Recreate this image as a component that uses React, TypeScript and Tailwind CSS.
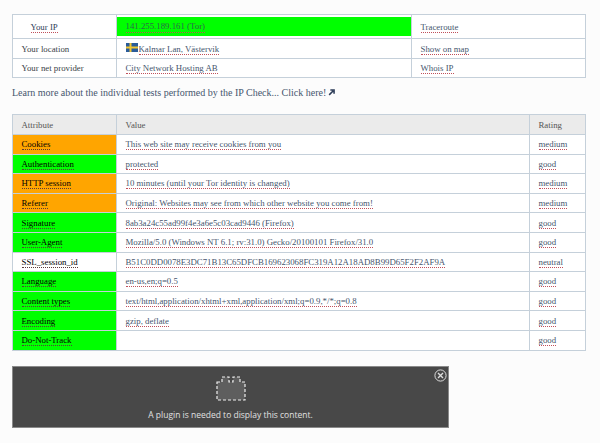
const serif = "font-['Liberation_Serif',serif]"

const Dotted = ({ children, dark }: { children: React.ReactNode; dark?: boolean }) => (
  <span className={`border-b border-dotted ${dark ? "border-[#5a3b3b]" : "border-[#c0505a]"}`}>{children}</span>
)

const rows: [string, string, string, string][] = [
  ["Cookies", "bg-[#ffa500]", "This web site may receive cookies from you", "medium"],
  ["Authentication", "bg-[#00ff00]", "protected", "good"],
  ["HTTP session", "bg-[#ffa500]", "10 minutes (until your Tor identity is changed)", "medium"],
  ["Referer", "bg-[#ffa500]", "Original: Websites may see from which other website you come from!", "medium"],
  ["Signature", "bg-[#00ff00]", "8ab3a24c55ad99f4e3a6e5c03cad9446 (Firefox)", "good"],
  ["User-Agent", "bg-[#00ff00]", "Mozilla/5.0 (Windows NT 6.1; rv:31.0) Gecko/20100101 Firefox/31.0", "good"],
  ["SSL_session_id", "bg-white", "B51C0DD0078E3DC71B13C65DFCB169623068FC319A12A18AD8B99D65F2F2AF9A", "neutral"],
  ["Language", "bg-[#00ff00]", "en-us,en;q=0.5", "good"],
  ["Content types", "bg-[#00ff00]", "text/html,application/xhtml+xml,application/xml;q=0.9,*/*;q=0.8", "good"],
  ["Encoding", "bg-[#00ff00]", "gzip, deflate", "good"],
  ["Do-Not-Track", "bg-[#00ff00]", "", "good"],
]

const Flag = () => (
  <svg width="12" height="9" viewBox="0 0 12 9" className="mr-[1px] inline-block align-[0px]">
    <rect width="12" height="9" fill="#2a5c9a" />
    <rect x="3.5" width="2" height="9" fill="#f2c530" />
    <rect y="3.5" width="12" height="2" fill="#f2c530" />
  </svg>
)

const cell = "border border-[#c5d0da] px-[8.5px] py-0 text-left font-normal"

export default function App() {
  return (
    <div className={`min-h-[443px] w-[600px] bg-[#fcfcfc] pt-[14px] pl-[12px] text-[8.8px] leading-[12px] text-[#46566e] ${serif}`}>
      <table className="w-[574px] table-fixed border-collapse bg-white">
        <colgroup>
          <col className="w-[104px]" />
          <col className="w-[295px]" />
          <col />
        </colgroup>
        <tbody>
          <tr className="h-[24px]">
            <td className={`${cell} pl-[17.5px] font-bold text-[#2d3d58]`}><Dotted>Your IP</Dotted></td>
            <td className="border border-[#c5d0da] py-[2px] pl-0 pr-0">
              <div className="flex h-[19px] items-center bg-[#00ff00] pl-[8.5px] text-[#2f6a4a]"><Dotted>141.255.189.161 (Tor)</Dotted></div>
            </td>
            <td className={cell}><Dotted>Traceroute</Dotted></td>
          </tr>
          <tr className="h-[20px]">
            <td className={`${cell} text-[#3a3f48]`}>Your location</td>
            <td className={cell}><Flag /><Dotted>Kalmar Lan, Västervik</Dotted></td>
            <td className={cell}><Dotted>Show on map</Dotted></td>
          </tr>
          <tr className="h-[19px]">
            <td className={`${cell} text-[#3a3f48]`}>Your net provider</td>
            <td className={cell}><Dotted>City Network Hosting AB</Dotted></td>
            <td className={cell}><Dotted>Whois IP</Dotted></td>
          </tr>
        </tbody>
      </table>

      <p className="mt-[8px] flex h-[13px] items-center text-[10px]">
        Learn more about the individual tests performed by the IP Check... Click here!
        <svg width="7" height="7" viewBox="0 0 9 9" className="ml-[2px]">
          <path d="M1.5 7.5 L6.5 2.5 M3 1.2 H7.8 V6" fill="none" stroke="#2d3d58" strokeWidth="2" />
        </svg>
      </p>

      <table className="mt-[15px] w-[574px] table-fixed border-collapse bg-white">
        <colgroup>
          <col className="w-[104px]" />
          <col className="w-[413px]" />
          <col />
        </colgroup>
        <thead>
          <tr className="h-[20px] bg-[#ebebeb] text-[#555]">
            <th className={cell}>Attribute</th>
            <th className={cell}>Value</th>
            <th className={cell}>Rating</th>
          </tr>
        </thead>
        <tbody>
          {rows.map(([name, bg, value, rating]) => (
            <tr key={name} className="h-[19.6px]">
              <td className={`${cell} ${bg} text-black`}><Dotted dark>{name}</Dotted></td>
              <td className={cell}>{value && <Dotted>{value}</Dotted>}</td>
              <td className={cell}><Dotted>{rating}</Dotted></td>
            </tr>
          ))}
        </tbody>
      </table>

      <div className="relative mt-[15px] flex h-[62px] w-[437px] flex-col items-center border border-[#8a8a8a] bg-[#484848] pt-[8px] font-['Open_Sans',sans-serif] text-[8.5px] text-[#e0e0e0]">
        <svg width="30" height="26" viewBox="0 0 30 26" className="shrink-0">
          <path d="M1 7 H6 V2 H13 V7 H17 V2 H24 V7 H29 V25 H1 Z" fill="#5e5e5e" stroke="#eee" strokeWidth="1.2" strokeDasharray="3 2" />
        </svg>
        <span className="mt-[8px] leading-[12px]">A plugin is needed to display this content.</span>
        <svg width="13" height="13" viewBox="0 0 13 13" className="absolute top-[2px] right-[1px]">
          <circle cx="6.5" cy="6.5" r="5.6" fill="none" stroke="#ddd" strokeWidth="1" />
          <path d="M4 4 L9 9 M9 4 L4 9" stroke="#ddd" strokeWidth="1.4" />
        </svg>
      </div>
    </div>
  )
}
